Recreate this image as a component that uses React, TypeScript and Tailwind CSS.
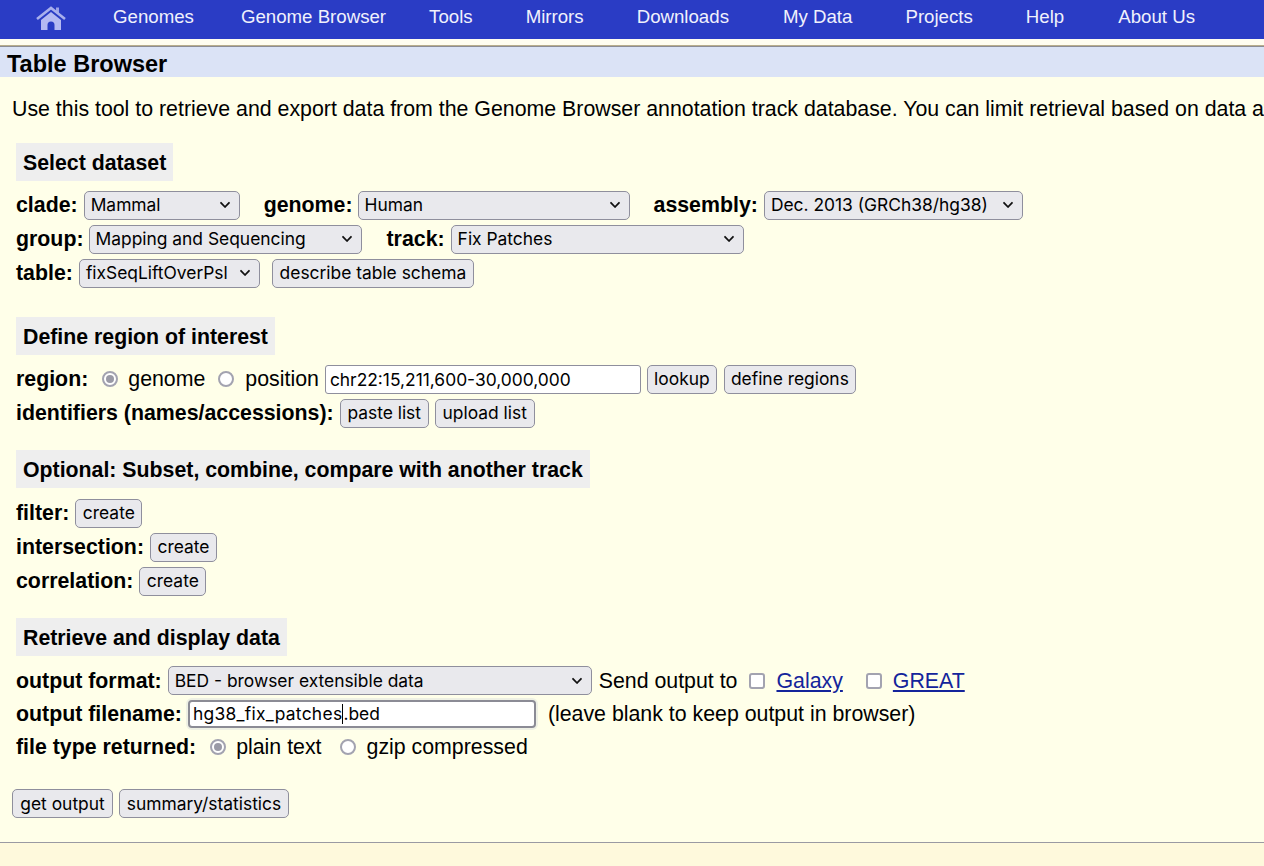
import React from "react";

const ctl = "[font-family:Inter,'Liberation_Sans',sans-serif] text-[17.4px] text-black";

function Btn({ w, children }: { w: string; children: React.ReactNode }) {
  return (
    <button className={`${ctl} ${w} h-[29px] shrink-0 rounded-[5px] border border-[#8f8f9d] bg-[#e9e9ed] text-center leading-none whitespace-nowrap`}>
      {children}
    </button>
  );
}

function Sel({ w, children }: { w: string; children: string }) {
  return (
    <span className={`${ctl} ${w} flex h-[29px] shrink-0 items-center justify-between rounded-[5px] border border-[#8f8f9d] bg-[#e9e9ed] pl-[6px] pr-[8px] whitespace-nowrap`}>
      <span>{children}</span>
      <svg width="12" height="8" viewBox="0 0 12 8" fill="none" stroke="#111" strokeWidth="1.8" strokeLinecap="round" strokeLinejoin="round">
        <path d="M2 1.8 6 6l4-4.2" />
      </svg>
    </span>
  );
}

function Radio({ on, className = "" }: { on?: boolean; className?: string }) {
  return (
    <span className={`flex h-[16px] w-[16px] shrink-0 items-center justify-center rounded-full border-2 border-[#a3a3b0] bg-white ${className}`}>
      {on && <span className="h-[8px] w-[8px] rounded-full bg-[#9a9aa6]" />}
    </span>
  );
}

function Row({ children, h = "h-[34px]" }: { children: React.ReactNode; h?: string }) {
  return <div className={`flex ${h} items-center whitespace-nowrap [&>a]:pt-[2px] [&>b]:pt-[2px] [&>.t]:pt-[2px]`}>{children}</div>;
}

function Head({ children, className = "" }: { children: string; className?: string }) {
  return <div className={`ml-[16px] flex h-[38px] w-fit items-center bg-[#eeeeee] px-[7px] pt-[3px] text-[21.3px] font-bold ${className}`}>{children}</div>;
}

const nav: [string, string][] = [
  ["Genomes", "ml-[47px]"],
  ["Genome Browser", "ml-[47px]"],
  ["Tools", "ml-[43px]"],
  ["Mirrors", "ml-[53px]"],
  ["Downloads", "ml-[53px]"],
  ["My Data", "ml-[54px]"],
  ["Projects", "ml-[53px]"],
  ["Help", "ml-[53px]"],
  ["About Us", "ml-[54px]"],
];

export default function App() {
  return (
    <div className="flex h-[866px] w-[1264px] flex-col overflow-hidden bg-[#ffffe9] font-['Liberation_Sans',Arial,sans-serif] text-[21.33px] leading-none text-black">
      <div className="flex h-[39px] items-center bg-[#2a3cc5] pb-[4px] pl-[36px] text-[18.66px] text-[#f0f1fc]">
        <svg className="h-[26px] w-[30px] shrink-0" viewBox="0 0 30 26">
          <path d="M20 6V2.5h3V9z" fill="#9aa1e8" />
          <path d="M1 14 15 3l14 11" fill="none" stroke="#a9b0ec" strokeWidth="2.6" />
          <path fillRule="evenodd" d="M5 15 15 7l10 8v10H5zM11.5 25h7v-5a3.5 3.5 0 0 0-7 0z" fill="#b5baf2" />
        </svg>
        {nav.map(([t, m]) => (
          <span key={t} className={m}>{t}</span>
        ))}
      </div>
      <div className="h-[6px] bg-[#fffdf0]" />
      <div className="h-[1px] bg-[#b8ad8c]" />
      <div className="h-[1px] bg-[#8c8c94]" />
      <div className="flex h-[30px] items-center bg-[#dbe3f6] pt-[5px] pl-[7px] text-[23.5px] font-bold">Table Browser</div>

      <div className="mt-[20px] ml-[12px] h-[24px] whitespace-nowrap leading-[24px]">
        Use this tool to retrieve and export data from the Genome Browser annotation track database. You can limit retrieval based on data attributes.
      </div>

      <Head className="mt-[22px]">Select dataset</Head>
      <div className="mt-[7px] pl-[16px]">
        <Row>
          <b>clade:</b>
          <Sel w="ml-[6px] w-[156px]">Mammal</Sel>
          <b className="ml-[24px]">genome:</b>
          <Sel w="ml-[5px] w-[272px]">Human</Sel>
          <b className="ml-[24px]">assembly:</b>
          <Sel w="ml-[6px] w-[259px]">Dec. 2013 (GRCh38/hg38)</Sel>
        </Row>
        <Row>
          <b>group:</b>
          <Sel w="ml-[5px] w-[273px]">Mapping and Sequencing</Sel>
          <b className="ml-[25px]">track:</b>
          <Sel w="ml-[6px] w-[293px]">Fix Patches</Sel>
        </Row>
        <Row>
          <b>table:</b>
          <Sel w="ml-[6px] w-[181px]">fixSeqLiftOverPsl</Sel>
          <Btn w="ml-[12px] w-[202px]">describe table schema</Btn>
        </Row>
      </div>

      <Head className="mt-[27px]">Define region of interest</Head>
      <div className="mt-[7px] pl-[16px]">
        <Row>
          <b>region:</b>
          <Radio on className="ml-[14px]" />
          <span className="t ml-[10px]">genome</span>
          <Radio className="ml-[13px]" />
          <span className="t ml-[11px]">position</span>
          <input
            readOnly
            value="chr22:15,211,600-30,000,000"
            className={`${ctl} ml-[6px] h-[29px] w-[316px] rounded-[3px] border border-[#8f8f9d] bg-white px-[4px]`}
          />
          <Btn w="ml-[6px] w-[70px]">lookup</Btn>
          <Btn w="ml-[7px] w-[132px]">define regions</Btn>
        </Row>
        <Row>
          <b>identifiers (names/accessions):</b>
          <Btn w="ml-[6px] w-[89px]">paste list</Btn>
          <Btn w="ml-[6px] w-[100px]">upload list</Btn>
        </Row>
      </div>

      <Head className="mt-[20px]">Optional: Subset, combine, compare with another track</Head>
      <div className="mt-[8px] pl-[16px]">
        <Row>
          <b>filter:</b>
          <Btn w="ml-[6px] w-[67px]">create</Btn>
        </Row>
        <Row>
          <b>intersection:</b>
          <Btn w="ml-[6px] w-[67px]">create</Btn>
        </Row>
        <Row>
          <b>correlation:</b>
          <Btn w="ml-[6px] w-[67px]">create</Btn>
        </Row>
      </div>

      <Head className="mt-[20px]">Retrieve and display data</Head>
      <div className="mt-[8px] pl-[16px]">
        <Row h="h-[33px]">
          <b>output format:</b>
          <Sel w="ml-[6px] w-[424px]">BED - browser extensible data</Sel>
          <span className="t ml-[7px]">Send output to</span>
          <span className="ml-[12px] h-[16px] w-[16px] rounded-[3px] border-2 border-[#a3a3b0] bg-white" />
          <a className="ml-[11px] text-[#14249b] underline">Galaxy</a>
          <span className="ml-[23px] h-[16px] w-[16px] rounded-[3px] border-2 border-[#a3a3b0] bg-white" />
          <a className="ml-[11px] text-[#14249b] underline">GREAT</a>
        </Row>
        <Row h="h-[33px]">
          <b>output filename:</b>
          <span className={`${ctl} relative ml-[6px] flex h-[28px] w-[348px] items-center rounded-[4px] border-2 border-[#8b8b95] bg-white pl-[3px] shadow-[0_0_0_2px_#eef0e4]`}>
            <span className="tracking-[0.3px]">hg38_fix_patches</span>
            <span className="h-[20px] w-px bg-black" />.bed
          </span>
          <span className="t ml-[12px]">(leave blank to keep output in browser)</span>
        </Row>
        <Row h="h-[33px]">
          <b>file type returned:</b>
          <Radio on className="ml-[14px]" />
          <span className="t ml-[10px]">plain text</span>
          <Radio className="ml-[18px]" />
          <span className="t ml-[11px]">gzip compressed</span>
        </Row>
      </div>

      <div className="mt-[26px] flex gap-[6px] pl-[12px]">
        <Btn w="w-[101px]">get output</Btn>
        <Btn w="w-[170px]">summary/statistics</Btn>
      </div>

      <div className="mt-[24px] h-px bg-[#9a9aa2]" />
      <div className="flex-1 bg-[#fef9dc]" />
    </div>
  );
}
